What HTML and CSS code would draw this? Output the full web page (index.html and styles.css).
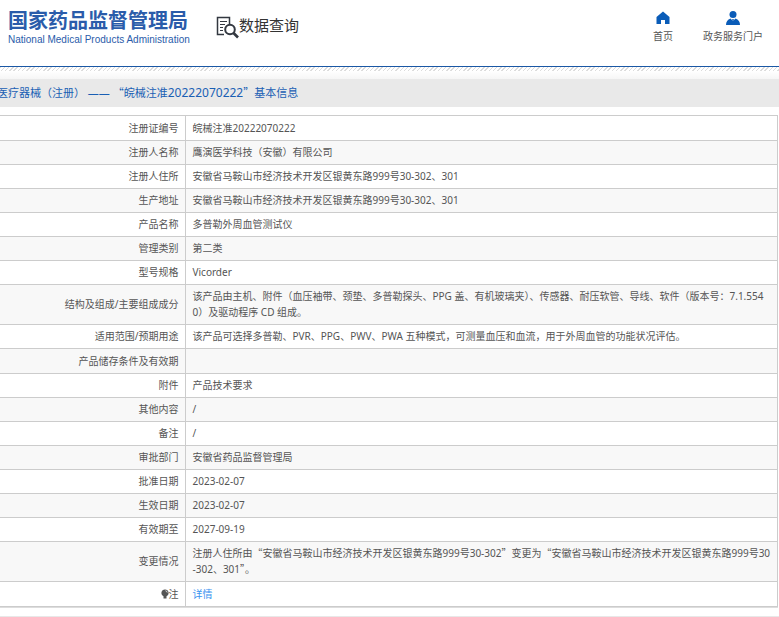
FILE: index.html
```html
<!DOCTYPE html>
<html lang="zh-CN">
<head>
    <meta charset="UTF-8" />
    <meta name="viewport" content="width=device-width, initial-scale=1" />
    <title>国家药品监督管理局 - 数据查询</title>
    <link rel="stylesheet" href="styles.css">
</head>
<body>
    <header class="header">
        <a class="logo" href="#">
            <span class="logo-cn">国家药品监督管理局</span>
            <span class="logo-en">National Medical Products Administration</span>
        </a>
        <a class="search" href="#">
            <svg width="23" height="23" viewBox="0 0 23 23" fill="none" stroke="#333840">
                <path d="M8 18.500H1.500V1.500H13.500V8" stroke-width="1.500" />
                <path d="M4 5.500H11M4 8.500H9M4 11.500H7M4 14.500H7" stroke-width="1.200" />
                <circle cx="14" cy="13.500" r="4.800" stroke-width="2" />
                <path d="M17.500 17L22 21.500" stroke-width="2.600" />
            </svg>
            <span>数据查询</span>
        </a>
        <nav class="nav">
            <a href="#">
                <svg width="14" height="14" viewBox="0 0 14 14" fill="#0a5cb8">
                    <path d="M7 0.500L13.500 6V13H9V9H5V13H0.500V6Z" />
                </svg>
                <span>首页</span>
            </a>
            <a href="#">
                <svg width="14" height="14" viewBox="0 0 14 14" fill="#0a5cb8">
                    <circle cx="7" cy="3.500" r="3.500" />
                    <path d="M0 14Q0 9 4.500 7.500L7 10L9.500 7.500Q14 9 14 14Z" />
                    <path d="M6.200 8H7.800L7.500 10H6.500Z" />
                </svg>
                <span>政务服务门户</span>
            </a>
        </nav>
    </header>
    <div class="stripes"></div>

    <main>
        <h1>医疗器械（注册） —— <span class="quote">“</span>皖械注准<span class="number">20222070222</span><span class="quote">”</span>基本信息</h1>

        <div class="detail">
            <table>
                <tbody>
                    <tr><th scope="row">注册证编号</th><td>皖械注准20222070222</td></tr>
                    <tr><th scope="row">注册人名称</th><td>鹰演医学科技（安徽）有限公司</td></tr>
                    <tr><th scope="row">注册人住所</th><td>安徽省马鞍山市经济技术开发区银黄东路999号30-302、301</td></tr>
                    <tr><th scope="row">生产地址</th><td>安徽省马鞍山市经济技术开发区银黄东路999号30-302、301</td></tr>
                    <tr><th scope="row">产品名称</th><td>多普勒外周血管测试仪</td></tr>
                    <tr><th scope="row">管理类别</th><td>第二类</td></tr>
                    <tr><th scope="row">型号规格</th><td>Vicorder</td></tr>
                    <tr><th scope="row">结构及组成/主要组成成分</th><td>该产品由主机、附件（血压袖带、颈垫、多普勒探头、PPG 盖、有机玻璃夹）、传感器、耐压软管、导线、软件（版本号：7.1.554<br>0）及驱动程序 CD 组成。</td></tr>
                    <tr><th scope="row">适用范围/预期用途</th><td>该产品可选择多普勒、PVR、PPG、PWV、PWA 五种模式，可测量血压和血流，用于外周血管的功能状况评估。</td></tr>
                    <tr class="empty"><th scope="row">产品储存条件及有效期</th><td></td></tr>
                    <tr><th scope="row">附件</th><td>产品技术要求</td></tr>
                    <tr><th scope="row">其他内容</th><td>/</td></tr>
                    <tr><th scope="row">备注</th><td>/</td></tr>
                    <tr><th scope="row">审批部门</th><td>安徽省药品监督管理局</td></tr>
                    <tr><th scope="row">批准日期</th><td>2023-02-07</td></tr>
                    <tr><th scope="row">生效日期</th><td>2023-02-07</td></tr>
                    <tr><th scope="row">有效期至</th><td>2027-09-19</td></tr>
                    <tr><th scope="row">变更情况</th><td>注册人住所由<span class="quote">“</span>安徽省马鞍山市经济技术开发区银黄东路999号30-302<span class="quote">”</span>变更为<span class="quote">“</span>安徽省马鞍山市经济技术开发区银黄东路999号30<br>-302、301<span class="quote">”</span>。</td></tr>
                    <tr>
                        <th scope="row">
                            <svg class="bulb" width="8" height="10" viewBox="0 0 8 10">
                                <path d="M4 0.500A3.500 3.500 0 0 1 5.500 7.200V9.500H2.500V7.200A3.500 3.500 0 0 1 4 0.500Z" fill="#555" />
                                <path d="M4.500 1.800Q6 2 6.200 3.500" fill="none" stroke="#fff" stroke-width="0.800" />
                            </svg>
                            注
                        </th>
                        <td><a href="#">详情</a></td>
                    </tr>
                </tbody>
            </table>
        </div>
    </main>
    <footer class="footer"></footer>
</body>
</html>
```

FILE: styles.css
```css
* {
    box-sizing: border-box;
}
body {
    margin: 0;
    background: #fff;
    color: #555;
    font-family: "Noto Sans", "Noto Sans CJK SC", sans-serif;
    font-size: 10px;
    line-height: 16px;
    overflow-x: hidden;
}
a {
    text-decoration: none;
    color: inherit;
}
.header {
    display: flex;
    align-items: flex-start;
    height: 67px;
    padding: 8px 16px 0 8px;
    border-bottom: 1px solid #1a58a5;
}
.logo {
    display: flex;
    flex-direction: column;
    width: 180px;
    color: #2a5caa;
}
.logo-cn {
    font-family: "Noto Sans CJK SC", sans-serif;
    font-size: 20px;
    font-weight: bold;
    line-height: 24px;
}
.logo-en {
    font-family: "Liberation Sans", sans-serif;
    font-size: 10px;
    white-space: nowrap;
}
.search {
    display: flex;
    align-items: center;
    margin: 7px 0 0 28px;
    color: #333;
    font-size: 15px;
    line-height: 20px;
}
.search span {
    padding-bottom: 4px;
}
.nav {
    display: flex;
    gap: 30px;
    margin-left: auto;
    padding-top: 3px;
}
.nav a {
    display: flex;
    flex-direction: column;
    align-items: center;
    gap: 3px;
}
.stripes {
    height: 12px;
    background:
        linear-gradient(transparent 4px, #fff 4px, #f6f6f6),
        repeating-linear-gradient(135deg, #dcdcdc 0, #dcdcdc 1px, #fff 1px, #fff 3px);
}
h1 {
    margin: 0 0 8px;
    padding: 4px 0;
    background: #e9e9e9;
    color: #1a5fb4;
    font-size: 11px;
    font-weight: normal;
    line-height: 20px;
    text-indent: -3px;
    white-space: nowrap;
}
.number {
    font-size: 12px;
    line-height: 1;
}
.quote {
    font-family: "Noto Sans CJK SC", sans-serif;
    line-height: 1;
}
.detail {
    margin-right: 1px;
    border-bottom: 1px solid #ddd;
}
table {
    width: 100%;
    border-collapse: collapse;
}
th, td {
    height: 24px;
    padding: 3px 4px 4px 7px;
    border: 1px solid #ccc;
    text-align: left;
    word-break: break-all;
}
th {
    width: 185px;
    padding-right: 6px;
    border-left: none;
    font-weight: normal;
    text-align: right;
}
tr:nth-child(even) {
    background: #f8f8f8;
}
tr:first-child th, tr:first-child td,
tr:last-child th, tr:last-child td,
.empty th, .empty td {
    height: 25px;
}
td a {
    color: #3a94f0;
}
.bulb {
    margin-right: -3px;
    vertical-align: -1px;
}
.footer {
    margin-top: 8px;
    border-top: 1px solid #e8e8e8;
}
```
